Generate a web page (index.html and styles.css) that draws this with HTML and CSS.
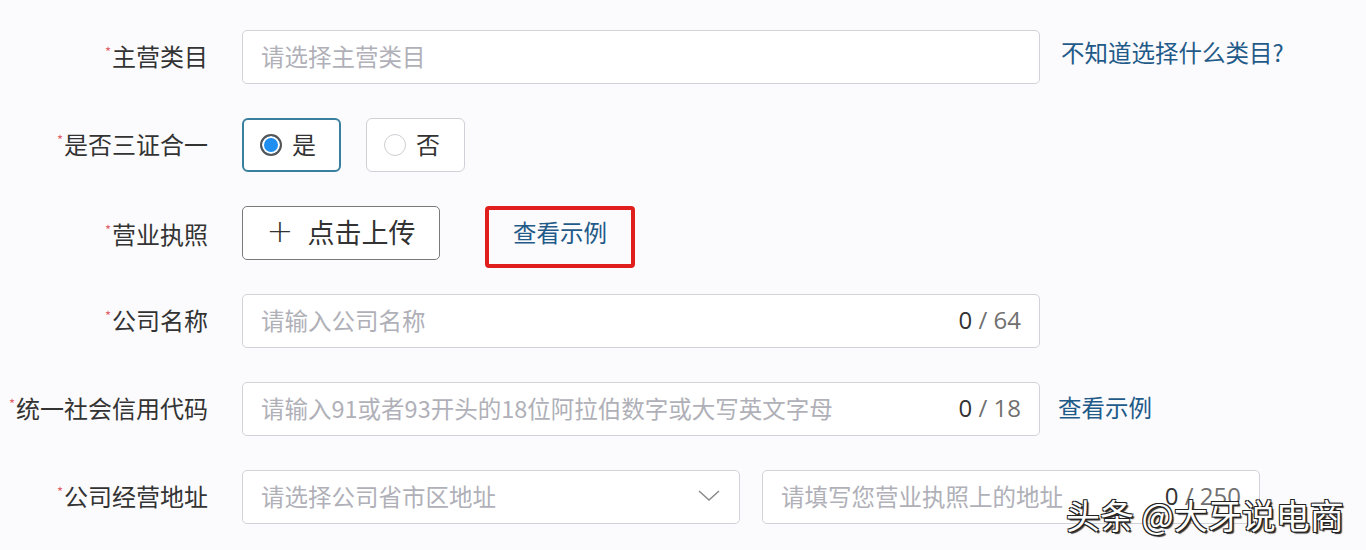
FILE: index.html
```html
<!DOCTYPE html>
<html lang="zh-CN">
<head>
    <meta charset="UTF-8">
    <meta name="viewport" content="width=device-width, initial-scale=1.0">
    <title>入驻信息</title>
    <link rel="stylesheet" href="styles.css">
</head>
<body>
    <div class="form">
        <div class="row">
            <div class="label"><span class="req">*</span>主营类目</div>
            <div class="input wide"><span class="ph">请选择主营类目</span></div>
            <a class="link after">不知道选择什么类目?</a>
        </div>
        <div class="row">
            <div class="label"><span class="req">*</span>是否三证合一</div>
            <div class="radios">
                <div class="radio checked"><span class="dot"></span>是</div>
                <div class="radio"><span class="dot"></span>否</div>
            </div>
        </div>
        <div class="row top">
            <div class="label"><span class="req">*</span>营业执照</div>
            <div class="upload"><span class="plus">+</span>点击上传</div>
            <div class="mark"><a class="link">查看示例</a></div>
        </div>
        <div class="row">
            <div class="label"><span class="req">*</span>公司名称</div>
            <div class="input wide"><span class="ph">请输入公司名称</span><span class="count"><b>0</b> / 64</span></div>
        </div>
        <div class="row">
            <div class="label"><span class="req">*</span>统一社会信用代码</div>
            <div class="input wide"><span class="ph">请输入91或者93开头的18位阿拉伯数字或大写英文字母</span><span class="count"><b>0</b> / 18</span></div>
            <a class="link after2">查看示例</a>
        </div>
        <div class="row">
            <div class="label"><span class="req">*</span>公司经营地址</div>
            <div class="input half"><span class="ph">请选择公司省市区地址</span>
                <svg class="chev" width="24" height="14" viewBox="0 0 24 14"><path d="M2 2 L12 11 L22 2" fill="none" stroke="#8a8a8a" stroke-width="1.5"/></svg>
            </div>
            <div class="input half gap"><span class="ph">请填写您营业执照上的地址</span><span class="count"><b>0</b> / 250</span></div>
        </div>
    </div>
    <div class="watermark">头条 @大牙说电商</div>
</body>
</html>
```

FILE: styles.css
```css
body {
    margin: 0;
    padding: 0;
    background: #fbfbfd;
    font-family: "Noto Sans CJK SC", "Open Sans", sans-serif;
    color: #333;
}
.form {
    padding-top: 30px;
}
.row {
    display: flex;
    align-items: center;
    height: 54px;
    margin-bottom: 34px;
}
.row.top {
    align-items: flex-start;
}
.label {
    width: 208px;
    flex-shrink: 0;
    text-align: right;
    font-size: 24px;
    line-height: 48px;
    padding-bottom: 6px;
    margin-right: 34px;
    white-space: nowrap;
}
.req {
    color: #e0606a;
    font-size: 13px;
    vertical-align: 9px;
    margin-right: 1px;
}
.input {
    box-sizing: border-box;
    height: 54px;
    background: #fff;
    border: 1px solid #d2d2da;
    border-radius: 5px;
    display: flex;
    align-items: center;
    padding: 0 18px 3px;
    font-size: 23.5px;
}
.input.wide {
    width: 798px;
}
.input.half {
    width: 498px;
}
.input.gap {
    margin-left: 22px;
}
.ph {
    color: #b0b0b8;
    flex: 1;
    white-space: nowrap;
    overflow: hidden;
}
.count {
    font-family: "Open Sans", sans-serif;
    font-size: 24px;
    color: #707070;
    margin-left: 12px;
}
.count b {
    font-weight: normal;
    color: #333;
}
.link {
    color: #1f5a88;
    font-size: 23.5px;
    cursor: pointer;
}
.after {
    margin-left: 21px;
    margin-top: -10px;
}
.after2 {
    margin-left: 18px;
    margin-top: -4px;
}
.radios {
    display: flex;
    gap: 25px;
}
.radio {
    box-sizing: border-box;
    width: 99px;
    height: 54px;
    border: 1px solid #d0d0d8;
    border-radius: 6px;
    background: #fff;
    display: flex;
    align-items: center;
    padding: 0 0 3px 17px;
    font-size: 24px;
}
.radio.checked {
    border: 2px solid #3a7f9e;
    padding-left: 16px;
}
.dot {
    box-sizing: border-box;
    width: 22px;
    height: 22px;
    border-radius: 50%;
    border: 1px solid #cfcfd4;
    margin: 3px 10px 0 0;
    background: #fff;
}
.radio.checked .dot {
    border: 2px solid #555;
    background: #1e8ef0;
    box-shadow: inset 0 0 0 2px #fff;
}
.upload {
    box-sizing: border-box;
    width: 198px;
    height: 54px;
    border: 1px solid #7a7a7a;
    border-radius: 5px;
    background: #fff;
    display: flex;
    align-items: center;
    justify-content: center;
    font-size: 27px;
    color: #333;
    padding-bottom: 4px;
}
.plus {
    font-family: "DejaVu Sans", sans-serif;
    font-size: 32px;
    font-weight: 200;
    margin-right: 14px;
    line-height: 1;
}
.mark {
    box-sizing: border-box;
    width: 150px;
    height: 62px;
    margin-left: 45px;
    border: 4px solid #e01e1e;
    border-radius: 4px;
    display: flex;
    align-items: center;
    justify-content: center;
    padding-bottom: 10px;
}
.watermark {
    position: absolute;
    left: 1066px;
    top: 490px;
    font-size: 34px;
    color: #fff;
    text-shadow: 1px 1px 0 #222, -1px -1px 0 #222, 1px -1px 0 #222, -1px 1px 0 #222, 2px 2px 1px #333;
}
```
